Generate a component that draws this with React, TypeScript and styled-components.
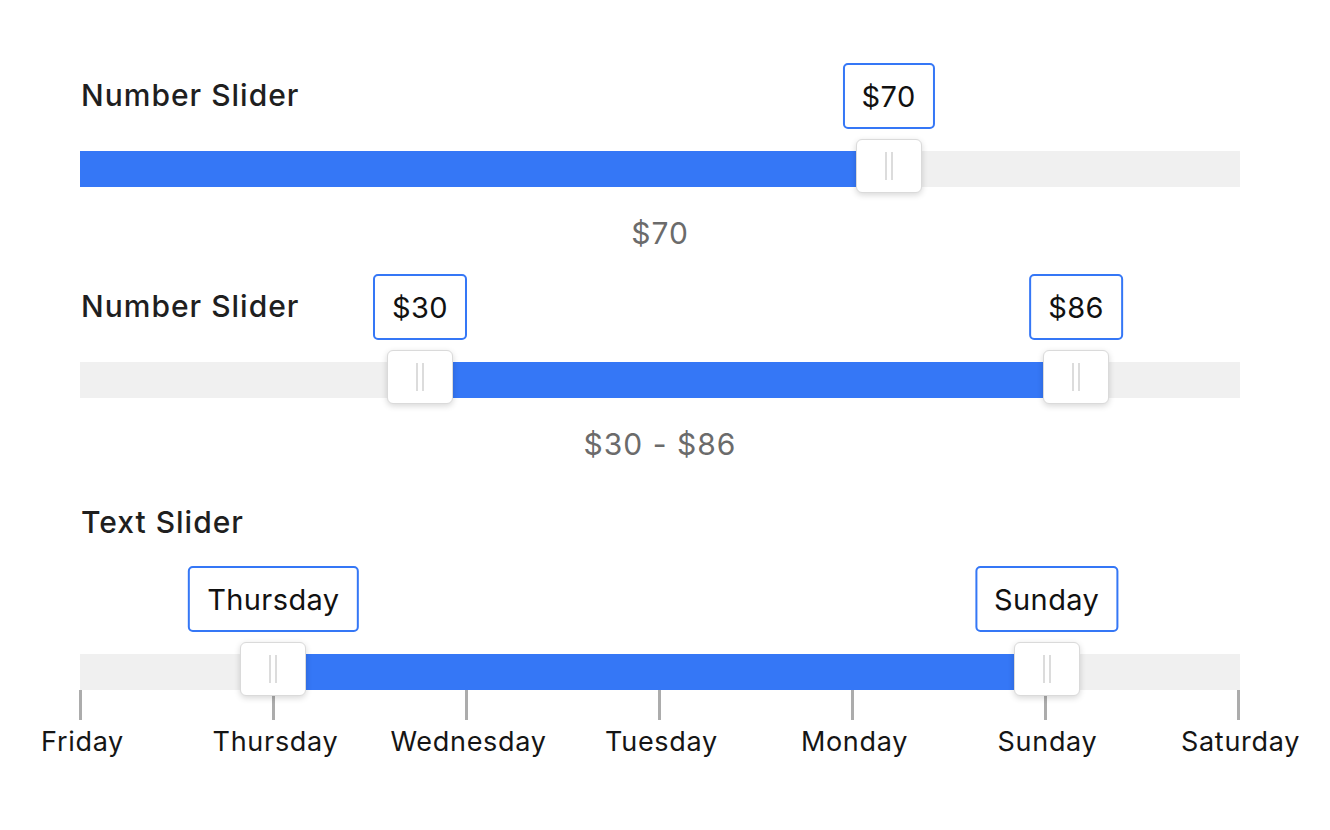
import React from "react";
import styled, { createGlobalStyle } from "styled-components";

const Global = createGlobalStyle`
  html, body { margin: 0; padding: 0; background: #fff; }
  body { font-family: Inter, "Noto Sans", sans-serif; }
`;

const Page = styled.div`
  width: 1160px;
  padding: 78px 90px 0 80px;
  display: flex;
  flex-direction: column;
`;

const Section = styled.section<{ $gapTop: number }>`
  display: flex;
  flex-direction: column;
  margin-top: ${(p) => p.$gapTop}px;
`;

const Title = styled.div`
  font-size: 30px;
  line-height: 34px;
  font-weight: 500;
  letter-spacing: 1px;
  color: #1f1f1f;
  padding-left: 1px;
`;

const SliderArea = styled.div<{ $gapTop: number }>`
  position: relative;
  margin-top: ${(p) => p.$gapTop}px;
`;

const Track = styled.div`
  position: relative;
  height: 36px;
  background: #f0f0f0;
`;

const Fill = styled.div`
  position: absolute;
  top: 0;
  bottom: 0;
  background: #3577f6;
`;

const Handle = styled.div`
  position: absolute;
  top: -12px;
  width: 66px;
  height: 54px;
  margin-left: -33px;
  box-sizing: border-box;
  background: #fff;
  border: 1.5px solid #dadada;
  border-radius: 6px;
  box-shadow: 0 2px 6px rgba(0, 0, 0, 0.16);
  display: flex;
  align-items: center;
  justify-content: center;
  gap: 4px;
  z-index: 2;
`;

const Grip = styled.span`
  width: 2px;
  height: 28px;
  background: #dcdcdc;
`;

const Bubble = styled.div`
  position: absolute;
  bottom: 63px;
  left: 50%;
  transform: translateX(-50%);
  height: 66px;
  box-sizing: border-box;
  padding: 0 17px;
  display: flex;
  align-items: center;
  white-space: nowrap;
  border: 2px solid #3577f6;
  border-radius: 5px;
  background: #fff;
  font-size: 29px;
  letter-spacing: 0.4px;
  color: #111;
`;

const Value = styled.div`
  margin-top: 29px;
  text-align: center;
  font-size: 30px;
  line-height: 34px;
  letter-spacing: 1px;
  color: #6b6b6b;
`;

const Scale = styled.div`
  display: flex;
  justify-content: space-between;
  padding: 0 2px 0 0;
`;

const Stop = styled.div`
  width: 0;
  display: flex;
  flex-direction: column;
  align-items: center;
`;

const Tick = styled.span`
  width: 3px;
  flex: none;
  height: 30px;
  background: #acacac;
`;

const TickLabel = styled.span`
  margin-top: 5px;
  margin-left: 5px;
  font-size: 27px;
  line-height: 34px;
  letter-spacing: 0.7px;
  color: #151515;
  white-space: nowrap;
`;

const TRACK_W = 1160;
const numPos = (v: number) => -11.4 + v * 11.714;

function Thumb({ left, label }: { left: number; label: string }) {
  return (
    <Handle style={{ left }}>
      <Bubble>{label}</Bubble>
      <Grip />
      <Grip />
    </Handle>
  );
}

const days = ["Friday", "Thursday", "Wednesday", "Tuesday", "Monday", "Sunday", "Saturday"];

export default function App() {
  const p70 = numPos(70);
  const p30 = numPos(30);
  const p86 = numPos(86);
  const dPos = (i: number) => (TRACK_W / 6) * i;
  const t1 = dPos(1);
  const t2 = dPos(5);
  return (
    <>
      <Global />
      <Page>
        <Section $gapTop={0}>
          <Title>Number Slider</Title>
          <SliderArea $gapTop={39}>
            <Track>
              <Fill style={{ left: 0, width: p70 }} />
              <Thumb left={p70} label="$70" />
            </Track>
          </SliderArea>
          <Value>$70</Value>
        </Section>
        <Section $gapTop={39}>
          <Title>Number Slider</Title>
          <SliderArea $gapTop={39}>
            <Track>
              <Fill style={{ left: p30, width: p86 - p30 }} />
              <Thumb left={p30} label="$30" />
              <Thumb left={p86} label="$86" />
            </Track>
          </SliderArea>
          <Value>$30 - $86</Value>
        </Section>
        <Section $gapTop={44}>
          <Title>Text Slider</Title>
          <SliderArea $gapTop={115}>
            <Track>
              <Fill style={{ left: t1, width: t2 - t1 }} />
              <Thumb left={t1} label="Thursday" />
              <Thumb left={t2} label="Sunday" />
            </Track>
            <Scale>
              {days.map((d) => (
                <Stop key={d}>
                  <Tick />
                  <TickLabel>{d}</TickLabel>
                </Stop>
              ))}
            </Scale>
          </SliderArea>
        </Section>
      </Page>
    </>
  );
}
